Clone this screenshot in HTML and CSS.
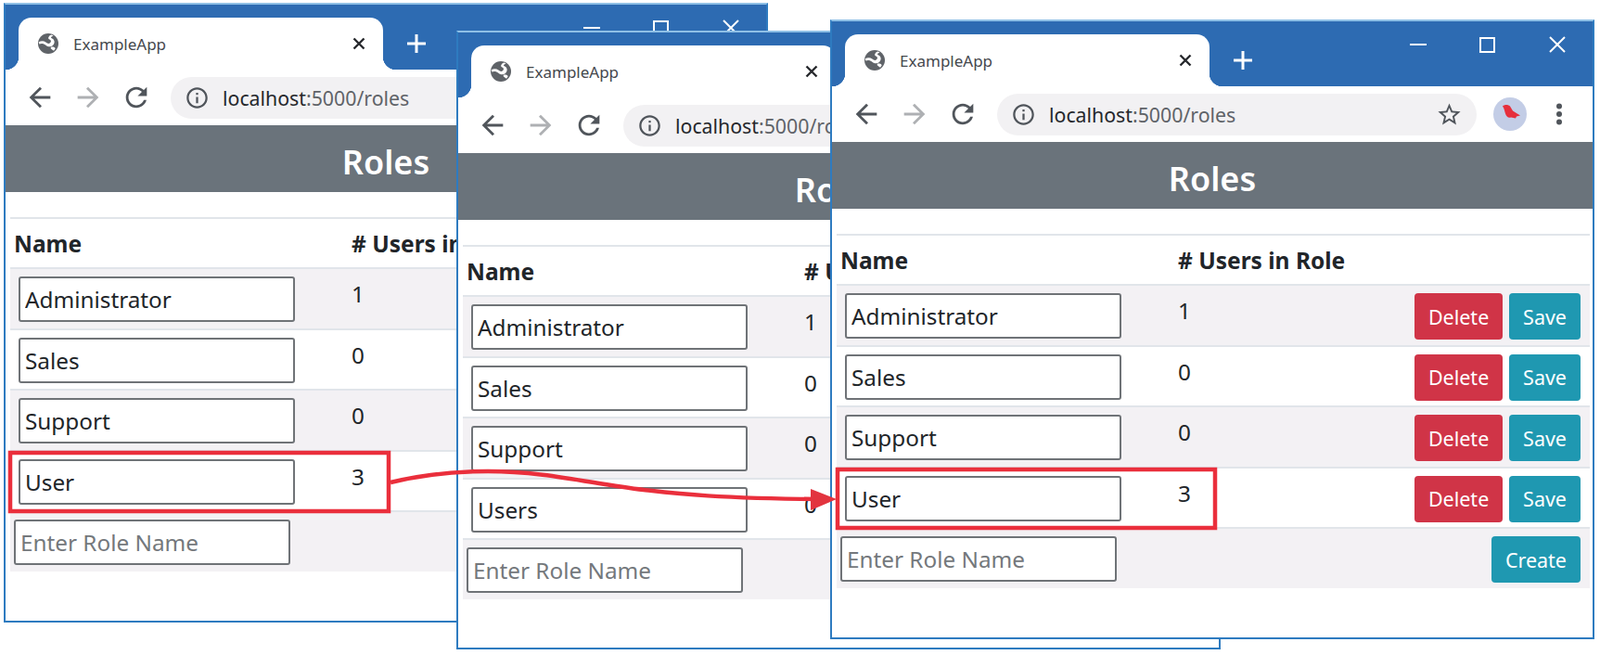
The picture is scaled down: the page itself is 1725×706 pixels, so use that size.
FILE: index.html
```html
<!DOCTYPE html>
<html lang="en">
<head>
  <meta charset="UTF-8" />
  <meta name="viewport" content="width=device-width, initial-scale=1.0" />
  <title>ExampleApp</title>
  <link rel="stylesheet" href="styles.css">
</head>
<body>
  <svg class="sprites" width="0" height="0" aria-hidden="true">
    <symbol id="globe" viewBox="2 2 20 20">
      <circle cx="12" cy="12" r="10" fill="#5f6368"/>
      <path d="M2.6 10.5c2.6-1.6 5-1.4 7 .2 1.5 1.2 3 1.8 4.4.4 1.3-1.3.6-2.8-.8-3.2-1.2-.4-1.5-1.8-.4-3 .6-.7 1.6-1.3 2.7-1.5l1.5 1c-1.3.3-2.3 1-2.3 1.6 0 .5 1.6.9 2.5 2 1.5 1.9 1 4.6-1 6-2.1 1.5-4.6 1-6.6-.5-2-1.6-4.3-2-6.4-1z" fill="#fff"/>
      <path d="M14.5 15.5c1.5-.5 3.3-.3 4.5 1.2l-1.5 2.3c-1.2-.9-2.3-1.7-3-2.3z" fill="#fff"/>
    </symbol>
    <symbol id="back" viewBox="0 0 24 24">
      <path d="M20 11H7.83l5.59-5.59L12 4l-8 8 8 8 1.41-1.41L7.83 13H20v-2z"/>
    </symbol>
    <symbol id="reload" viewBox="0 0 24 24">
      <path d="M17.65 6.35C16.2 4.9 14.21 4 12 4c-4.42 0-7.99 3.58-7.99 8s3.57 8 7.99 8c3.73 0 6.84-2.55 7.73-6h-2.08c-.82 2.33-3.04 4-5.65 4-3.31 0-6-2.69-6-6s2.69-6 6-6c1.66 0 3.14.69 4.22 1.78L13 11h7V4l-2.35 2.35z"/>
    </symbol>
    <symbol id="info" viewBox="0 0 24 24">
      <path d="M11 7h2v2h-2zm0 4h2v6h-2zm1-9C6.48 2 2 6.48 2 12s4.48 10 10 10 10-4.48 10-10S17.52 2 12 2zm0 18c-4.41 0-8-3.59-8-8s3.59-8 8-8 8 3.59 8 8-3.59 8-8 8z"/>
    </symbol>
    <symbol id="star" viewBox="0 0 24 24">
      <path d="M22 9.24l-7.19-.62L12 2 9.19 8.63 2 9.24l5.46 4.73L5.82 21 12 17.27 18.18 21l-1.63-7.03L22 9.24zM12 15.4l-3.76 2.27 1-4.28-3.32-2.88 4.38-.38L12 6.1l1.71 4.04 4.38.38-3.32 2.88 1 4.28L12 15.4z"/>
    </symbol>
    <symbol id="avatar" viewBox="0 0 36 36">
      <circle cx="18" cy="18" r="18" fill="#c3cde6"/>
      <path d="M10 9.500c2-2 6-2 8 0l3 5 8 5-4 1-1 2-5-1c-3 1-5-1-6-4-1-3-1-5-3-8z" fill="#e62f3c"/>
    </symbol>
    <symbol id="dots" viewBox="0 0 34 34">
      <circle cx="17" cy="8.500" r="3"/>
      <circle cx="17" cy="17" r="3"/>
      <circle cx="17" cy="25.500" r="3"/>
    </symbol>
    <symbol id="cross" viewBox="0 0 14 14">
      <path d="M1.500 1.500l11 11M12.500 1.500l-11 11" fill="none" stroke="currentColor" stroke-width="2.400"/>
    </symbol>
    <symbol id="cross-thin" viewBox="0 0 18 18">
      <path d="M1 1l16 16M17 1L1 17" fill="none" stroke="currentColor" stroke-width="2"/>
    </symbol>
    <symbol id="plus" viewBox="0 0 20 20">
      <path d="M10 0v20M0 10h20" fill="none" stroke="currentColor" stroke-width="3"/>
    </symbol>
  </svg>

  <!-- left window: role still called User -->
  <section class="window win-left">
    <div class="tabstrip">
      <div class="tab">
        <svg class="favicon"><use href="#globe"/></svg>
        <span class="tab-title">ExampleApp</span>
        <svg class="tab-close"><use href="#cross"/></svg>
      </div>
      <svg class="new-tab"><use href="#plus"/></svg>
      <div class="controls">
        <span class="ctl"><i class="ctl-min"></i></span>
        <span class="ctl"><i class="ctl-max"></i></span>
        <span class="ctl"><svg class="ctl-close"><use href="#cross-thin"/></svg></span>
      </div>
    </div>
    <div class="toolbar">
      <svg class="nav"><use href="#back"/></svg>
      <svg class="nav nav-off"><use href="#back"/></svg>
      <svg class="nav"><use href="#reload"/></svg>
      <div class="omnibox">
        <svg class="omni-info"><use href="#info"/></svg>
        <span class="url"><b>localhost</b>:5000/roles</span>
      </div>
    </div>
    <h1 class="page-title">Roles</h1>
    <table class="roles">
      <thead>
        <tr><th>Name</th><th># Users in Role</th><th></th></tr>
      </thead>
      <tbody>
        <tr><td class="name"><input type="text" value="Administrator"></td><td class="count">1</td><td></td></tr>
        <tr><td class="name"><input type="text" value="Sales"></td><td class="count">0</td><td></td></tr>
        <tr><td class="name"><input type="text" value="Support"></td><td class="count">0</td><td></td></tr>
        <tr><td class="name"><input type="text" value="User"></td><td class="count">3</td><td></td></tr>
        <tr class="add"><td class="name"><input type="text" placeholder="Enter Role Name"></td><td></td><td></td></tr>
      </tbody>
    </table>
  </section>

  <!-- middle window: role renamed to Users -->
  <section class="window win-mid">
    <div class="tabstrip">
      <div class="tab">
        <svg class="favicon"><use href="#globe"/></svg>
        <span class="tab-title">ExampleApp</span>
        <svg class="tab-close"><use href="#cross"/></svg>
      </div>
    </div>
    <div class="toolbar">
      <svg class="nav"><use href="#back"/></svg>
      <svg class="nav nav-off"><use href="#back"/></svg>
      <svg class="nav"><use href="#reload"/></svg>
      <div class="omnibox">
        <svg class="omni-info"><use href="#info"/></svg>
        <span class="url"><b>localhost</b>:5000/roles</span>
      </div>
    </div>
    <h1 class="page-title">Roles</h1>
    <table class="roles">
      <thead>
        <tr><th>Name</th><th># Users in Role</th><th></th></tr>
      </thead>
      <tbody>
        <tr><td class="name"><input type="text" value="Administrator"></td><td class="count">1</td><td></td></tr>
        <tr><td class="name"><input type="text" value="Sales"></td><td class="count">0</td><td></td></tr>
        <tr><td class="name"><input type="text" value="Support"></td><td class="count">0</td><td></td></tr>
        <tr><td class="name"><input type="text" value="Users"></td><td class="count">0</td><td></td></tr>
        <tr class="add"><td class="name"><input type="text" placeholder="Enter Role Name"></td><td></td><td></td></tr>
      </tbody>
    </table>
  </section>

  <!-- right window: back to User, 3 members -->
  <section class="window win-right">
    <div class="tabstrip">
      <div class="tab">
        <svg class="favicon"><use href="#globe"/></svg>
        <span class="tab-title">ExampleApp</span>
        <svg class="tab-close"><use href="#cross"/></svg>
      </div>
      <svg class="new-tab"><use href="#plus"/></svg>
      <div class="controls">
        <span class="ctl"><i class="ctl-min"></i></span>
        <span class="ctl"><i class="ctl-max"></i></span>
        <span class="ctl"><svg class="ctl-close"><use href="#cross-thin"/></svg></span>
      </div>
    </div>
    <div class="toolbar">
      <svg class="nav"><use href="#back"/></svg>
      <svg class="nav nav-off"><use href="#back"/></svg>
      <svg class="nav"><use href="#reload"/></svg>
      <div class="omnibox">
        <svg class="omni-info"><use href="#info"/></svg>
        <span class="url"><b>localhost</b>:5000/roles</span>
        <svg class="omni-star"><use href="#star"/></svg>
      </div>
      <svg class="avatar"><use href="#avatar"/></svg>
      <svg class="menu"><use href="#dots"/></svg>
    </div>
    <h1 class="page-title">Roles</h1>
    <table class="roles">
      <thead>
        <tr><th>Name</th><th># Users in Role</th><th></th></tr>
      </thead>
      <tbody>
        <tr><td class="name"><input type="text" value="Administrator"></td><td class="count">1</td><td class="actions"><button class="btn del">Delete</button><button class="btn save">Save</button></td></tr>
        <tr><td class="name"><input type="text" value="Sales"></td><td class="count">0</td><td class="actions"><button class="btn del">Delete</button><button class="btn save">Save</button></td></tr>
        <tr><td class="name"><input type="text" value="Support"></td><td class="count">0</td><td class="actions"><button class="btn del">Delete</button><button class="btn save">Save</button></td></tr>
        <tr><td class="name"><input type="text" value="User"></td><td class="count">3</td><td class="actions"><button class="btn del">Delete</button><button class="btn save">Save</button></td></tr>
        <tr class="add"><td class="name"><input type="text" placeholder="Enter Role Name"></td><td></td><td class="actions"><button class="btn save">Create</button></td></tr>
      </tbody>
    </table>
  </section>

  <!-- callout drawn on top of the windows -->
  <svg class="callout" viewBox="0 0 1725 706">
    <rect x="11" y="488" width="408" height="63"/>
    <rect x="903" y="506" width="407" height="63"/>
    <path d="M421 520C450 513 490 508 526 508C590 508 640 522 694 528C730 532 770 537 880 538"/>
    <polygon points="874,527 902,538 874,550"/>
  </svg>
</body>
</html>
```

FILE: styles.css
```css
* {
  box-sizing: border-box;
}
html, body {
  margin: 0;
  height: 706px;
  overflow: hidden;
  background-color: #fff;
}
body {
  position: relative;
  font-family: "Noto Sans", sans-serif;
  color: #212529;
}
.sprites {
  position: absolute;
}

/* windows sit on a free canvas, overlapping */
.window {
  position: absolute;
  width: 824px;
  display: flex;
  flex-direction: column;
  overflow: hidden;
  background-color: #fff;
  border: 2px solid #2e7bc0;
  border-top-color: #8fc0e6;
}
.win-left {
  left: 4px;
  top: 3px;
  height: 668px;
}
.win-mid {
  left: 492px;
  top: 33px;
  height: 667px;
}
.win-right {
  left: 895px;
  top: 21px;
  height: 668px;
}

/* tab strip */
.tabstrip {
  display: flex;
  align-items: flex-end;
  flex: none;
  height: 70px;
  padding-left: 14px;
  background-color: #2d6bb2;
}
.tab {
  position: relative;
  display: flex;
  align-items: center;
  width: 393px;
  height: 56px;
  padding: 0 19px 0 21px;
  background-color: #fff;
  border-radius: 14px 14px 0 0;
}
.tab::before,
.tab::after {
  content: "";
  position: absolute;
  bottom: 0;
  width: 14px;
  height: 14px;
}
.tab::before {
  left: -14px;
  background: radial-gradient(circle at 0 0, #2d6bb2 14px, #fff 14.5px);
}
.tab::after {
  right: -14px;
  background: radial-gradient(circle at 100% 0, #2d6bb2 14px, #fff 14.5px);
}
.favicon {
  width: 22px;
  height: 22px;
  flex: none;
}
.tab-title {
  margin-left: 16px;
  font-size: 17px;
  color: #45484d;
}
.tab-close {
  width: 14px;
  height: 14px;
  margin-left: auto;
  color: #26282c;
}
.new-tab {
  width: 20px;
  height: 20px;
  flex: none;
  margin: 0 0 18px 26px;
  color: #fff;
}
.controls {
  display: flex;
  align-self: flex-start;
  margin-left: auto;
  padding-right: 1px;
}
.ctl {
  display: flex;
  align-items: center;
  justify-content: center;
  width: 75px;
  height: 50px;
  color: #fff;
}
.ctl-min {
  width: 18px;
  height: 2px;
  background-color: #fff;
}
.ctl-max {
  width: 17px;
  height: 17px;
  border: 2px solid #fff;
}
.ctl-close {
  width: 18px;
  height: 18px;
}

/* address bar */
.toolbar {
  display: flex;
  align-items: center;
  flex: none;
  gap: 18px;
  height: 60px;
  padding-left: 20px;
}
.nav {
  width: 34px;
  height: 34px;
  flex: none;
  fill: #50555b;
}
.nav-off {
  fill: #aeb0b3;
  transform: scaleX(-1);
}
.omnibox {
  display: flex;
  align-items: center;
  flex: none;
  width: 517px;
  height: 45px;
  margin-left: 2px;
  padding: 0 15px;
  background-color: #f2f1f3;
  border-radius: 23px;
}
.omni-info {
  width: 27px;
  height: 27px;
  flex: none;
  fill: #50555b;
}
.url {
  margin-left: 14px;
  font-size: 21.300px;
  color: #5f6368;
  white-space: nowrap;
}
.url b {
  font-weight: 400;
  color: #26282c;
}
.omni-star {
  width: 29px;
  height: 29px;
  flex: none;
  margin-left: auto;
  fill: #50555b;
}
.avatar {
  width: 36px;
  height: 36px;
  flex: none;
}
.menu {
  width: 34px;
  height: 34px;
  flex: none;
  fill: #50555b;
}

/* page */
.page-title {
  flex: none;
  height: 72px;
  margin: 0 0 27px;
  font-size: 36px;
  font-weight: 600;
  line-height: 80px;
  text-align: center;
  color: #fff;
  background-color: #6a737b;
}
.roles {
  width: 812px;
  margin-left: 5px;
  table-layout: fixed;
  border-collapse: collapse;
  font-size: 24.300px;
}
.roles th,
.roles td {
  padding: 8px 0 6.500px;
  text-align: left;
  border-top: 2px solid #e1e5ea;
}
.roles th {
  height: 54px;
  padding: 7px 0 7px 4px;
  font-size: 24.500px;
  font-weight: 700;
}
.roles th:nth-child(1),
.roles td:nth-child(1) {
  width: 364px;
}
.roles th:nth-child(2),
.roles td:nth-child(2) {
  width: 200px;
}
.roles tbody tr:nth-child(odd) {
  background-color: #f3f1f4;
}
.roles td.name {
  padding-left: 9px;
}
.roles tr.add td.name {
  padding-left: 4px;
}
.roles td.count {
  padding-top: 10px;
  padding-left: 4px;
  vertical-align: top;
}
.roles input {
  display: block;
  width: 298px;
  height: 49px;
  padding: 0 5px;
  font: inherit;
  color: #212529;
  background-color: #fff;
  border: 2px solid #6f7377;
  border-radius: 3px;
}
.roles input::placeholder {
  color: #74787c;
}
.roles td.actions {
  padding: 8px 10px 5px 0;
  text-align: right;
}
.btn {
  height: 50px;
  margin-left: 7px;
  padding: 0 15px;
  font-family: inherit;
  font-size: 21.500px;
  color: #fff;
  border: none;
  border-radius: 4px;
}
.del {
  width: 95px;
  padding: 0;
  background-color: #d03447;
}
.save {
  min-width: 76px;
  background-color: #1f98b1;
}

/* red highlight boxes and arrow */
.callout {
  position: absolute;
  left: 0;
  top: 0;
  width: 1725px;
  height: 706px;
  fill: none;
  stroke: #ea2f3c;
  stroke-width: 4.500;
}
.callout polygon {
  fill: #e2343f;
  stroke: none;
}
```
